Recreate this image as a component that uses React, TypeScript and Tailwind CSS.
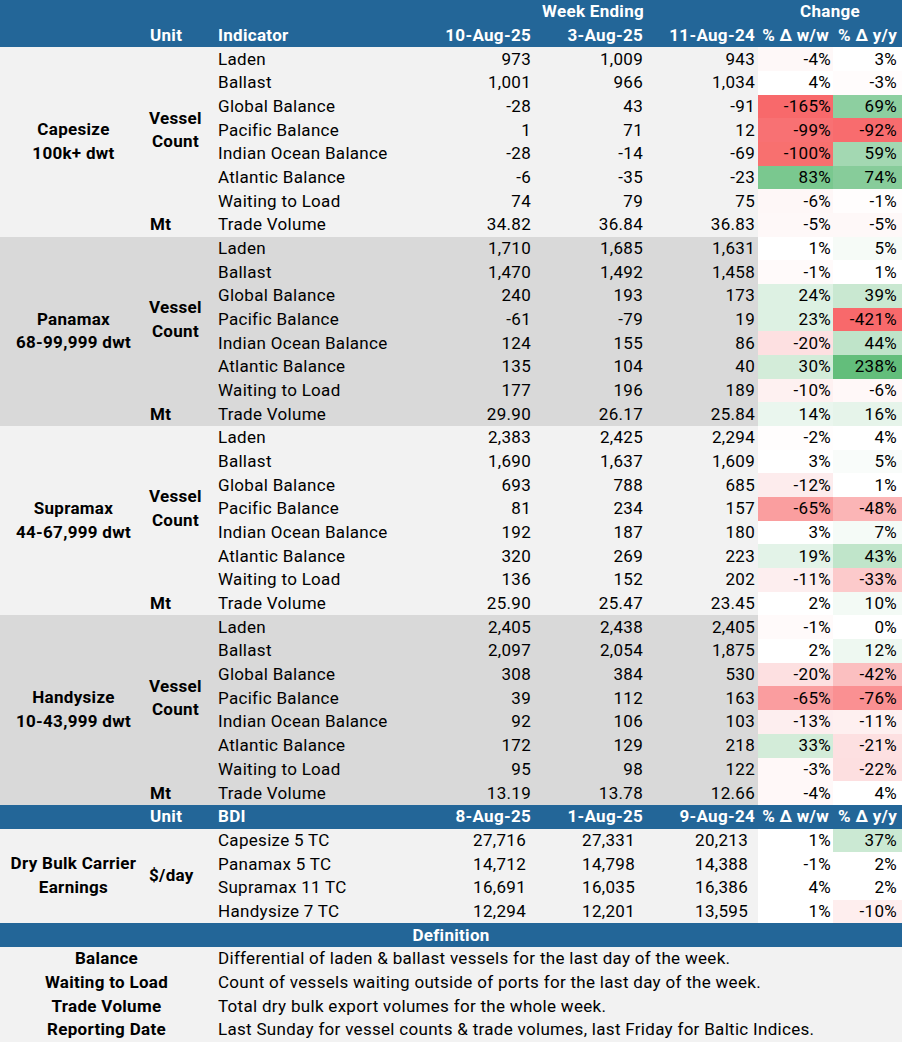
import React from "react";

type Row = [string, string, string, string, string, string, string, string];

const HDR = "bg-[#236698] text-white font-bold";

const blocks: { name: string[]; bg: string; rows: Row[] }[] = [
  {
    name: ["Capesize", "100k+ dwt"],
    bg: "bg-[#f2f2f2]",
    rows: [
      ["Laden", "973", "1,009", "943", "-4%", "3%", "bg-[#fef8f8]", "bg-[#ffffff]"],
      ["Ballast", "1,001", "966", "1,034", "4%", "-3%", "bg-[#ffffff]", "bg-[#fffcfc]"],
      ["Global Balance", "-28", "43", "-91", "-165%", "69%", "bg-[#f8696b]", "bg-[#8dcfa0]"],
      ["Pacific Balance", "1", "71", "12", "-99%", "-92%", "bg-[#f87173]", "bg-[#f86c6e]"],
      ["Indian Ocean Balance", "-28", "-14", "-69", "-100%", "59%", "bg-[#f8706f]", "bg-[#a3d8b2]"],
      ["Atlantic Balance", "-6", "-35", "-23", "83%", "74%", "bg-[#7ac88f]", "bg-[#87cc9a]"],
      ["Waiting to Load", "74", "79", "75", "-6%", "-1%", "bg-[#fef7f7]", "bg-[#fffdfd]"],
      ["Trade Volume", "34.82", "36.84", "36.83", "-5%", "-5%", "bg-[#fef8f8]", "bg-[#fef8f8]"],
    ],
  },
  {
    name: ["Panamax", "68-99,999 dwt"],
    bg: "bg-[#d9d9d9]",
    rows: [
      ["Laden", "1,710", "1,685", "1,631", "1%", "5%", "bg-[#ffffff]", "bg-[#f6fbf7]"],
      ["Ballast", "1,470", "1,492", "1,458", "-1%", "1%", "bg-[#fffafa]", "bg-[#ffffff]"],
      ["Global Balance", "240", "193", "173", "24%", "39%", "bg-[#ddf1e3]", "bg-[#c9e8d1]"],
      ["Pacific Balance", "-61", "-79", "19", "23%", "-421%", "bg-[#ddf1e3]", "bg-[#f8696b]"],
      ["Indian Ocean Balance", "124", "155", "86", "-20%", "44%", "bg-[#fde0e1]", "bg-[#bfe4c9]"],
      ["Atlantic Balance", "135", "104", "40", "30%", "238%", "bg-[#d3ecd9]", "bg-[#63be7b]"],
      ["Waiting to Load", "177", "196", "189", "-10%", "-6%", "bg-[#fef1f1]", "bg-[#fff8f8]"],
      ["Trade Volume", "29.90", "26.17", "25.84", "14%", "16%", "bg-[#eaf6ee]", "bg-[#e6f4ea]"],
    ],
  },
  {
    name: ["Supramax", "44-67,999 dwt"],
    bg: "bg-[#f2f2f2]",
    rows: [
      ["Laden", "2,383", "2,425", "2,294", "-2%", "4%", "bg-[#fffdfd]", "bg-[#ffffff]"],
      ["Ballast", "1,690", "1,637", "1,609", "3%", "5%", "bg-[#ffffff]", "bg-[#f9fcfa]"],
      ["Global Balance", "693", "788", "685", "-12%", "1%", "bg-[#fdeced]", "bg-[#ffffff]"],
      ["Pacific Balance", "81", "234", "157", "-65%", "-48%", "bg-[#fa9e9f]", "bg-[#fbb5b6]"],
      ["Indian Ocean Balance", "192", "187", "180", "3%", "7%", "bg-[#ffffff]", "bg-[#f5fbf7]"],
      ["Atlantic Balance", "320", "269", "223", "19%", "43%", "bg-[#e3f3e8]", "bg-[#c0e5ca]"],
      ["Waiting to Load", "136", "152", "202", "-11%", "-33%", "bg-[#fdeeef]", "bg-[#fccacb]"],
      ["Trade Volume", "25.90", "25.47", "23.45", "2%", "10%", "bg-[#ffffff]", "bg-[#f3faf5]"],
    ],
  },
  {
    name: ["Handysize", "10-43,999 dwt"],
    bg: "bg-[#d9d9d9]",
    rows: [
      ["Laden", "2,405", "2,438", "2,405", "-1%", "0%", "bg-[#fffafa]", "bg-[#ffffff]"],
      ["Ballast", "2,097", "2,054", "1,875", "2%", "12%", "bg-[#ffffff]", "bg-[#eef8f1]"],
      ["Global Balance", "308", "384", "530", "-20%", "-42%", "bg-[#fde0e1]", "bg-[#fbbfc0]"],
      ["Pacific Balance", "39", "112", "163", "-65%", "-76%", "bg-[#fa9d9f]", "bg-[#fa9092]"],
      ["Indian Ocean Balance", "92", "106", "103", "-13%", "-11%", "bg-[#fdeeef]", "bg-[#fef0f0]"],
      ["Atlantic Balance", "172", "129", "218", "33%", "-21%", "bg-[#d3ecd9]", "bg-[#fde0e1]"],
      ["Waiting to Load", "95", "98", "122", "-3%", "-22%", "bg-[#fff8f8]", "bg-[#fddfe0]"],
      ["Trade Volume", "13.19", "13.78", "12.66", "-4%", "4%", "bg-[#fff8f8]", "bg-[#ffffff]"],
    ],
  },
];

const earnings: Row[] = [
  ["Capesize 5 TC", "27,716", "27,331", "20,213", "1%", "37%", "bg-[#ffffff]", "bg-[#cbe9d3]"],
  ["Panamax 5 TC", "14,712", "14,798", "14,388", "-1%", "2%", "bg-[#ffffff]", "bg-[#ffffff]"],
  ["Supramax 11 TC", "16,691", "16,035", "16,386", "4%", "2%", "bg-[#ffffff]", "bg-[#ffffff]"],
  ["Handysize 7 TC", "12,294", "12,201", "13,595", "1%", "-10%", "bg-[#ffffff]", "bg-[#feeeee]"],
];

const defs: [string, string][] = [
  ["Balance", "Differential of laden & ballast vessels for the last day of the week."],
  ["Waiting to Load", "Count of vessels waiting outside of ports for the last day of the week."],
  ["Trade Volume", "Total dry bulk export volumes for the whole week."],
  ["Reporting Date", "Last Sunday for vessel counts & trade volumes, last Friday for Baltic Indices."],
];

const COLS = "grid grid-cols-[147px_66px_209px_112px_112px_112px_75px_1fr]";
const ROWH = "h-[23.68px]";

function Cell({ children, className = "" }: { children?: React.ReactNode; className?: string }) {
  return <div className={`flex items-center whitespace-nowrap ${ROWH} ${className}`}>{children}</div>;
}

function HeaderRows() {
  return (
    <div className={`${COLS} ${HDR}`}>
      <Cell />
      <Cell />
      <Cell />
      <Cell className="col-span-3 justify-center pl-[6px]">Week Ending</Cell>
      <Cell className="col-span-2 justify-center">Change</Cell>
      <Cell />
      <Cell className="pl-[3px]">Unit</Cell>
      <Cell className="pl-[5px]">Indicator</Cell>
      <Cell className="justify-end pr-[3px]">10-Aug-25</Cell>
      <Cell className="justify-end pr-[3px]">3-Aug-25</Cell>
      <Cell className="justify-end pr-[3px]">11-Aug-24</Cell>
      <Cell className="justify-end pr-[4px]">% Δ w/w</Cell>
      <Cell className="justify-end pr-[5px]">% Δ y/y</Cell>
    </div>
  );
}

function Block({ b }: { b: (typeof blocks)[number] }) {
  return (
    <div className={`${COLS} grid-rows-[repeat(8,23.68px)]`}>
      <div className={`row-span-8 col-start-1 row-start-1 ${b.bg} flex flex-col items-center justify-center font-bold leading-[23.68px]`}>
        {b.name.map((n) => (
          <span key={n}>{n}</span>
        ))}
      </div>
      <div className={`row-span-7 col-start-2 row-start-1 ${b.bg} flex items-center justify-start pl-[2px] font-bold`}>
        <div className="flex flex-col items-center leading-[23.68px]">
          <span>Vessel</span>
          <span>Count</span>
        </div>
      </div>
      <div className={`col-start-2 row-start-8 ${b.bg} flex items-center pl-[3px] font-bold`}>Mt</div>
      {b.rows.map((r, i) => (
        <React.Fragment key={i}>
          <div className={`col-start-3 ${b.bg} flex items-center pl-[5px] whitespace-nowrap`} style={{ gridRowStart: i + 1 }}>
            {r[0]}
          </div>
          <div className={`col-start-4 ${b.bg} flex items-center justify-end pr-[3px]`} style={{ gridRowStart: i + 1 }}>
            {r[1]}
          </div>
          <div className={`col-start-5 ${b.bg} flex items-center justify-end pr-[3px]`} style={{ gridRowStart: i + 1 }}>
            {r[2]}
          </div>
          <div className={`col-start-6 ${b.bg} flex items-center justify-end pr-[3px]`} style={{ gridRowStart: i + 1 }}>
            {r[3]}
          </div>
          <div className={`col-start-7 ${r[6]} flex items-center justify-end pr-[2px]`} style={{ gridRowStart: i + 1 }}>
            {r[4]}
          </div>
          <div className={`col-start-8 ${r[7]} flex items-center justify-end pr-[5px]`} style={{ gridRowStart: i + 1 }}>
            {r[5]}
          </div>
        </React.Fragment>
      ))}
    </div>
  );
}

function Earnings() {
  return (
    <>
      <div className={`${COLS} ${HDR}`}>
        <Cell />
        <Cell className="pl-[3px]">Unit</Cell>
        <Cell className="pl-[5px]">BDI</Cell>
        <Cell className="justify-end pr-[3px]">8-Aug-25</Cell>
        <Cell className="justify-end pr-[3px]">1-Aug-25</Cell>
        <Cell className="justify-end pr-[3px]">9-Aug-24</Cell>
        <Cell className="justify-end pr-[4px]">% Δ w/w</Cell>
        <Cell className="justify-end pr-[5px]">% Δ y/y</Cell>
      </div>
      <div className={`${COLS} grid-rows-[repeat(4,23.68px)]`}>
        <div className="row-span-4 col-start-1 row-start-1 bg-[#f2f2f2] flex flex-col items-center justify-center font-bold leading-[23.68px]">
          <span>Dry Bulk Carrier</span>
          <span>Earnings</span>
        </div>
        <div className="row-span-4 col-start-2 row-start-1 bg-[#f2f2f2] flex items-center pl-[2px] font-bold">$/day</div>
        {earnings.map((r, i) => (
          <React.Fragment key={i}>
            <div className="col-start-3 bg-[#f2f2f2] flex items-center pl-[5px] whitespace-nowrap" style={{ gridRowStart: i + 1 }}>
              {r[0]}
            </div>
            <div className="col-start-4 bg-[#f2f2f2] flex items-center justify-end pr-[8px]" style={{ gridRowStart: i + 1 }}>
              {r[1]}
            </div>
            <div className="col-start-5 bg-[#f2f2f2] flex items-center justify-end pr-[11px]" style={{ gridRowStart: i + 1 }}>
              {r[2]}
            </div>
            <div className="col-start-6 bg-[#f2f2f2] flex items-center justify-end pr-[10px]" style={{ gridRowStart: i + 1 }}>
              {r[3]}
            </div>
            <div className={`col-start-7 ${r[6]} flex items-center justify-end pr-[2px]`} style={{ gridRowStart: i + 1 }}>
              {r[4]}
            </div>
            <div className={`col-start-8 ${r[7]} flex items-center justify-end pr-[5px]`} style={{ gridRowStart: i + 1 }}>
              {r[5]}
            </div>
          </React.Fragment>
        ))}
      </div>
    </>
  );
}

function Definitions() {
  return (
    <>
      <div className={`${HDR} ${ROWH} flex items-center justify-center`}>Definition</div>
      {defs.map(([k, v]) => (
        <div key={k} className={`grid grid-cols-[213px_1fr] bg-[#f2f2f2] ${ROWH}`}>
          <div className="flex items-center justify-center font-bold">{k}</div>
          <div className="flex items-center pl-[5px] whitespace-nowrap">{v}</div>
        </div>
      ))}
    </>
  );
}

export default function App() {
  return (
    <div className="w-[902px] h-[1042px] bg-white overflow-hidden text-[17px] tracking-[0.3px] text-black font-['Roboto',sans-serif] leading-none">
      <HeaderRows />
      {blocks.map((b) => (
        <Block key={b.name[0]} b={b} />
      ))}
      <Earnings />
      <Definitions />
    </div>
  );
}
